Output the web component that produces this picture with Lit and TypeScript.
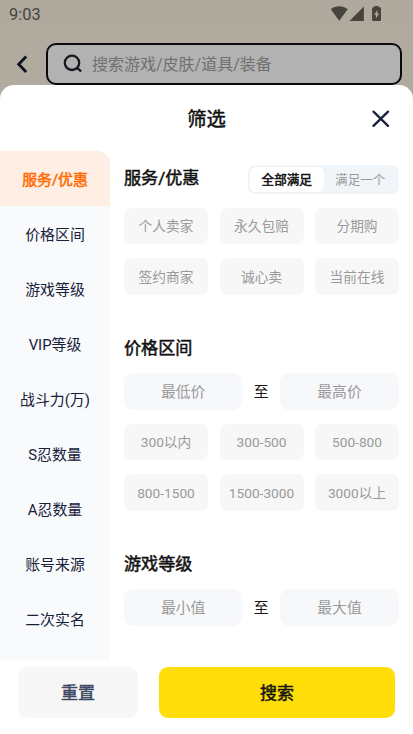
import { LitElement, html, css } from "lit";
import { customElement, property, state } from "lit/decorators.js";
import { classMap } from "lit/directives/class-map.js";

@customElement("status-bar")
class StatusBar extends LitElement {
  static styles = css`
    :host { display: flex; height: 28px; padding: 0 30px 0 9px; box-sizing: border-box; justify-content: space-between; color: #47433d; background: #b0a99d; }
    .time { font-size: 16.4px; line-height: 29px; }
    svg { display: block; width: 54px; height: 28px; }
  `;
  render() {
    return html`
      <span class="time">9:03</span>
      <svg viewBox="0 0 54 28" fill="currentColor">
        <path d="M1.8 9.3C6.4 5.1 14 5.1 18.7 9.3L10.2 20.8Z" />
        <path d="M34.9 6.6V21H20.5Z" />
        <path fill-rule="evenodd" d="M45.3 7.3V6h4.3v1.3h1.2q1.2 0 1.2 1.2v11.3q0 1.2-1.2 1.2h-6.5q-1.2 0-1.2-1.2V8.5q0-1.2 1.2-1.2ZM48.3 9.9l-3.2 4.8h1.8v3.7l3.2-4.9h-1.8Z" />
      </svg>
    `;
  }
}

@customElement("search-header")
class SearchHeader extends LitElement {
  static styles = css`
    :host { display: flex; height: 57px; padding: 15px 11.5px 0 0; box-sizing: border-box; background: #b1aa9e; }
    .back { width: 46px; height: 42px; flex: none; }
    .field { flex: 1; height: 42px; box-sizing: border-box; border: 2px solid #090a0c; border-radius: 10px; background: #b2b2b2; display: flex; align-items: center; color: #707070; font-size: 16px; }
    .glass { width: 20px; height: 20px; margin: 0 9.5px 0 14.5px; }
    .hint { line-height: 37px; }
  `;
  render() {
    return html`
      <svg class="back" viewBox="0 0 46 42" fill="none" stroke="#0c1424" stroke-width="2.8">
        <path d="M26.2 13.5L18.7 21.3L26.2 29" />
      </svg>
      <div class="field">
        <svg class="glass" viewBox="0 0 20 20" fill="none" stroke="#15181c" stroke-width="2.3">
          <circle cx="9" cy="8.8" r="7.2" /><path d="M14 13.8L18.2 17.4" />
        </svg>
        <span class="hint">搜索游戏/皮肤/道具/装备</span>
      </div>
    `;
  }
}

@customElement("filter-nav")
class FilterNav extends LitElement {
  @state() active = 0;
  static styles = css`
    :host { display: block; width: 110px; flex: none; background: #f9fafc; border-top-right-radius: 13px; overflow: hidden; }
    .item { height: 55px; box-sizing: border-box; padding-top: 2px; line-height: 55px; text-align: center; font-size: 14.9px; color: #17213a; cursor: pointer; }
    .active { background: #ffeee4; color: #ff6a00; -webkit-text-stroke: 0.5px currentColor; }
  `;
  render() {
    const items = ["服务/优惠", "价格区间", "游戏等级", "VIP等级", "战斗力(万)", "S忍数量", "A忍数量", "账号来源", "二次实名"];
    return items.map((t, i) => html`<div class=${classMap({ item: true, active: i === this.active })} @click=${() => (this.active = i)}>${t}</div>`);
  }
}

@customElement("chip-grid")
class ChipGrid extends LitElement {
  @property({ attribute: false }) items: string[] = [];
  static styles = css`
    :host { display: grid; grid-template-columns: repeat(3, 84px); justify-content: space-between; row-gap: 14px; }
    .chip { height: 36.5px; box-sizing: border-box; padding-top: 0.4px; line-height: 37px; border-radius: 7px; background: #f7f7f7; color: #9a9a9a; font-size: 13.7px; text-align: center; white-space: nowrap; }
  `;
  render() {
    return this.items.map((t) => html`<div class="chip">${t}</div>`);
  }
}

@customElement("range-row")
class RangeRow extends LitElement {
  @property() low = "";
  @property() high = "";
  static styles = css`
    :host { display: grid; grid-template-columns: 118.3px 1fr 119px; align-items: start; text-align: center; font-size: 14.8px; line-height: 36px; height: 37px; color: #151515; }
    .box, .to { height: 37px; box-sizing: border-box; padding-top: 1px; }
    .box { border-radius: 9px; background: #f7f8fa; color: #9a9a9a; }
  `;
  render() {
    return html`<div class="box">${this.low}</div><div class="to">至</div><div class="box">${this.high}</div>`;
  }
}

@customElement("app-root")
class AppRoot extends LitElement {
  static styles = css`
    :host { display: flex; flex-direction: column; height: 734px; overflow: hidden; background: #b1aa9e; font-family: Roboto, "Noto Sans CJK SC", sans-serif; }
    .sheet { flex: 1; display: flex; flex-direction: column; background: #fff; border-radius: 14px 14px 0 0; min-height: 0; }
    .head { display: grid; grid-template-columns: 64px 1fr 64px; align-items: center; height: 66.3px; flex: none; text-align: center; font-size: 19.3px; line-height: 66px; color: #111; }
    .head, .title, .on, .foot { -webkit-text-stroke: 0.5px currentColor; }
    .name { padding-top: 2px; }
    .close { width: 20px; height: 20px; margin-left: 21.5px; margin-bottom: 1px; }
    .body { display: flex; height: 508.7px; flex: none; }
    .content { flex: 1; padding: 13.7px 14px 0; }
    .title { font-size: 17.1px; line-height: 25px; padding-top: 0.5px; color: #111; }
    .top { display: flex; justify-content: space-between; height: 43px; }
    .top .title { padding-top: 1.2px; }
    .segment { display: flex; box-sizing: border-box; width: 151px; height: 29px; padding: 2px; border-radius: 7px; background: #eff5f8; font-size: 12.6px; line-height: 25px; text-align: center; color: #999; }
    .on { width: 73.5px; border-radius: 6px; background: #fff; color: #111; }
    .off { flex: 1; }
    .section { margin-top: 40.5px; }
    .fields { display: flex; flex-direction: column; gap: 13.7px; margin-top: 12px; }
    .foot { display: flex; gap: 21px; padding: 7.5px 18px 0; font-size: 17px; line-height: 52px; text-align: center; }
    .reset { width: 120px; height: 50.5px; border-radius: 9px; background: #f7f7f7; color: #3d4964; }
    .submit { flex: 1; height: 50.5px; border-radius: 9px; background: #ffdd09; color: #15150f; }
  `;
  render() {
    return html`
      <status-bar></status-bar>
      <search-header></search-header>
      <div class="sheet">
        <div class="head">
          <span></span><span class="name">筛选</span>
          <svg class="close" viewBox="0 0 20 20" fill="none" stroke="#17213a" stroke-width="2.3" stroke-linecap="round"><path d="M2.5 2.6L17 16.9M17 2.6L2.5 16.9" /></svg>
        </div>
        <div class="body">
          <filter-nav></filter-nav>
          <div class="content">
            <div class="top">
              <div class="title">服务/优惠</div>
              <div class="segment"><div class="on">全部满足</div><div class="off">满足一个</div></div>
            </div>
            <chip-grid .items=${["个人卖家", "永久包赔", "分期购", "签约商家", "诚心卖", "当前在线"]}></chip-grid>
            <div class="section">
              <div class="title">价格区间</div>
              <div class="fields">
                <range-row low="最低价" high="最高价"></range-row>
                <chip-grid .items=${["300以内", "300-500", "500-800", "800-1500", "1500-3000", "3000以上"]}></chip-grid>
              </div>
            </div>
            <div class="section">
              <div class="title">游戏等级</div>
              <div class="fields"><range-row low="最小值" high="最大值"></range-row></div>
            </div>
          </div>
        </div>
        <div class="foot"><div class="reset">重置</div><div class="submit">搜索</div></div>
      </div>
    `;
  }
}
